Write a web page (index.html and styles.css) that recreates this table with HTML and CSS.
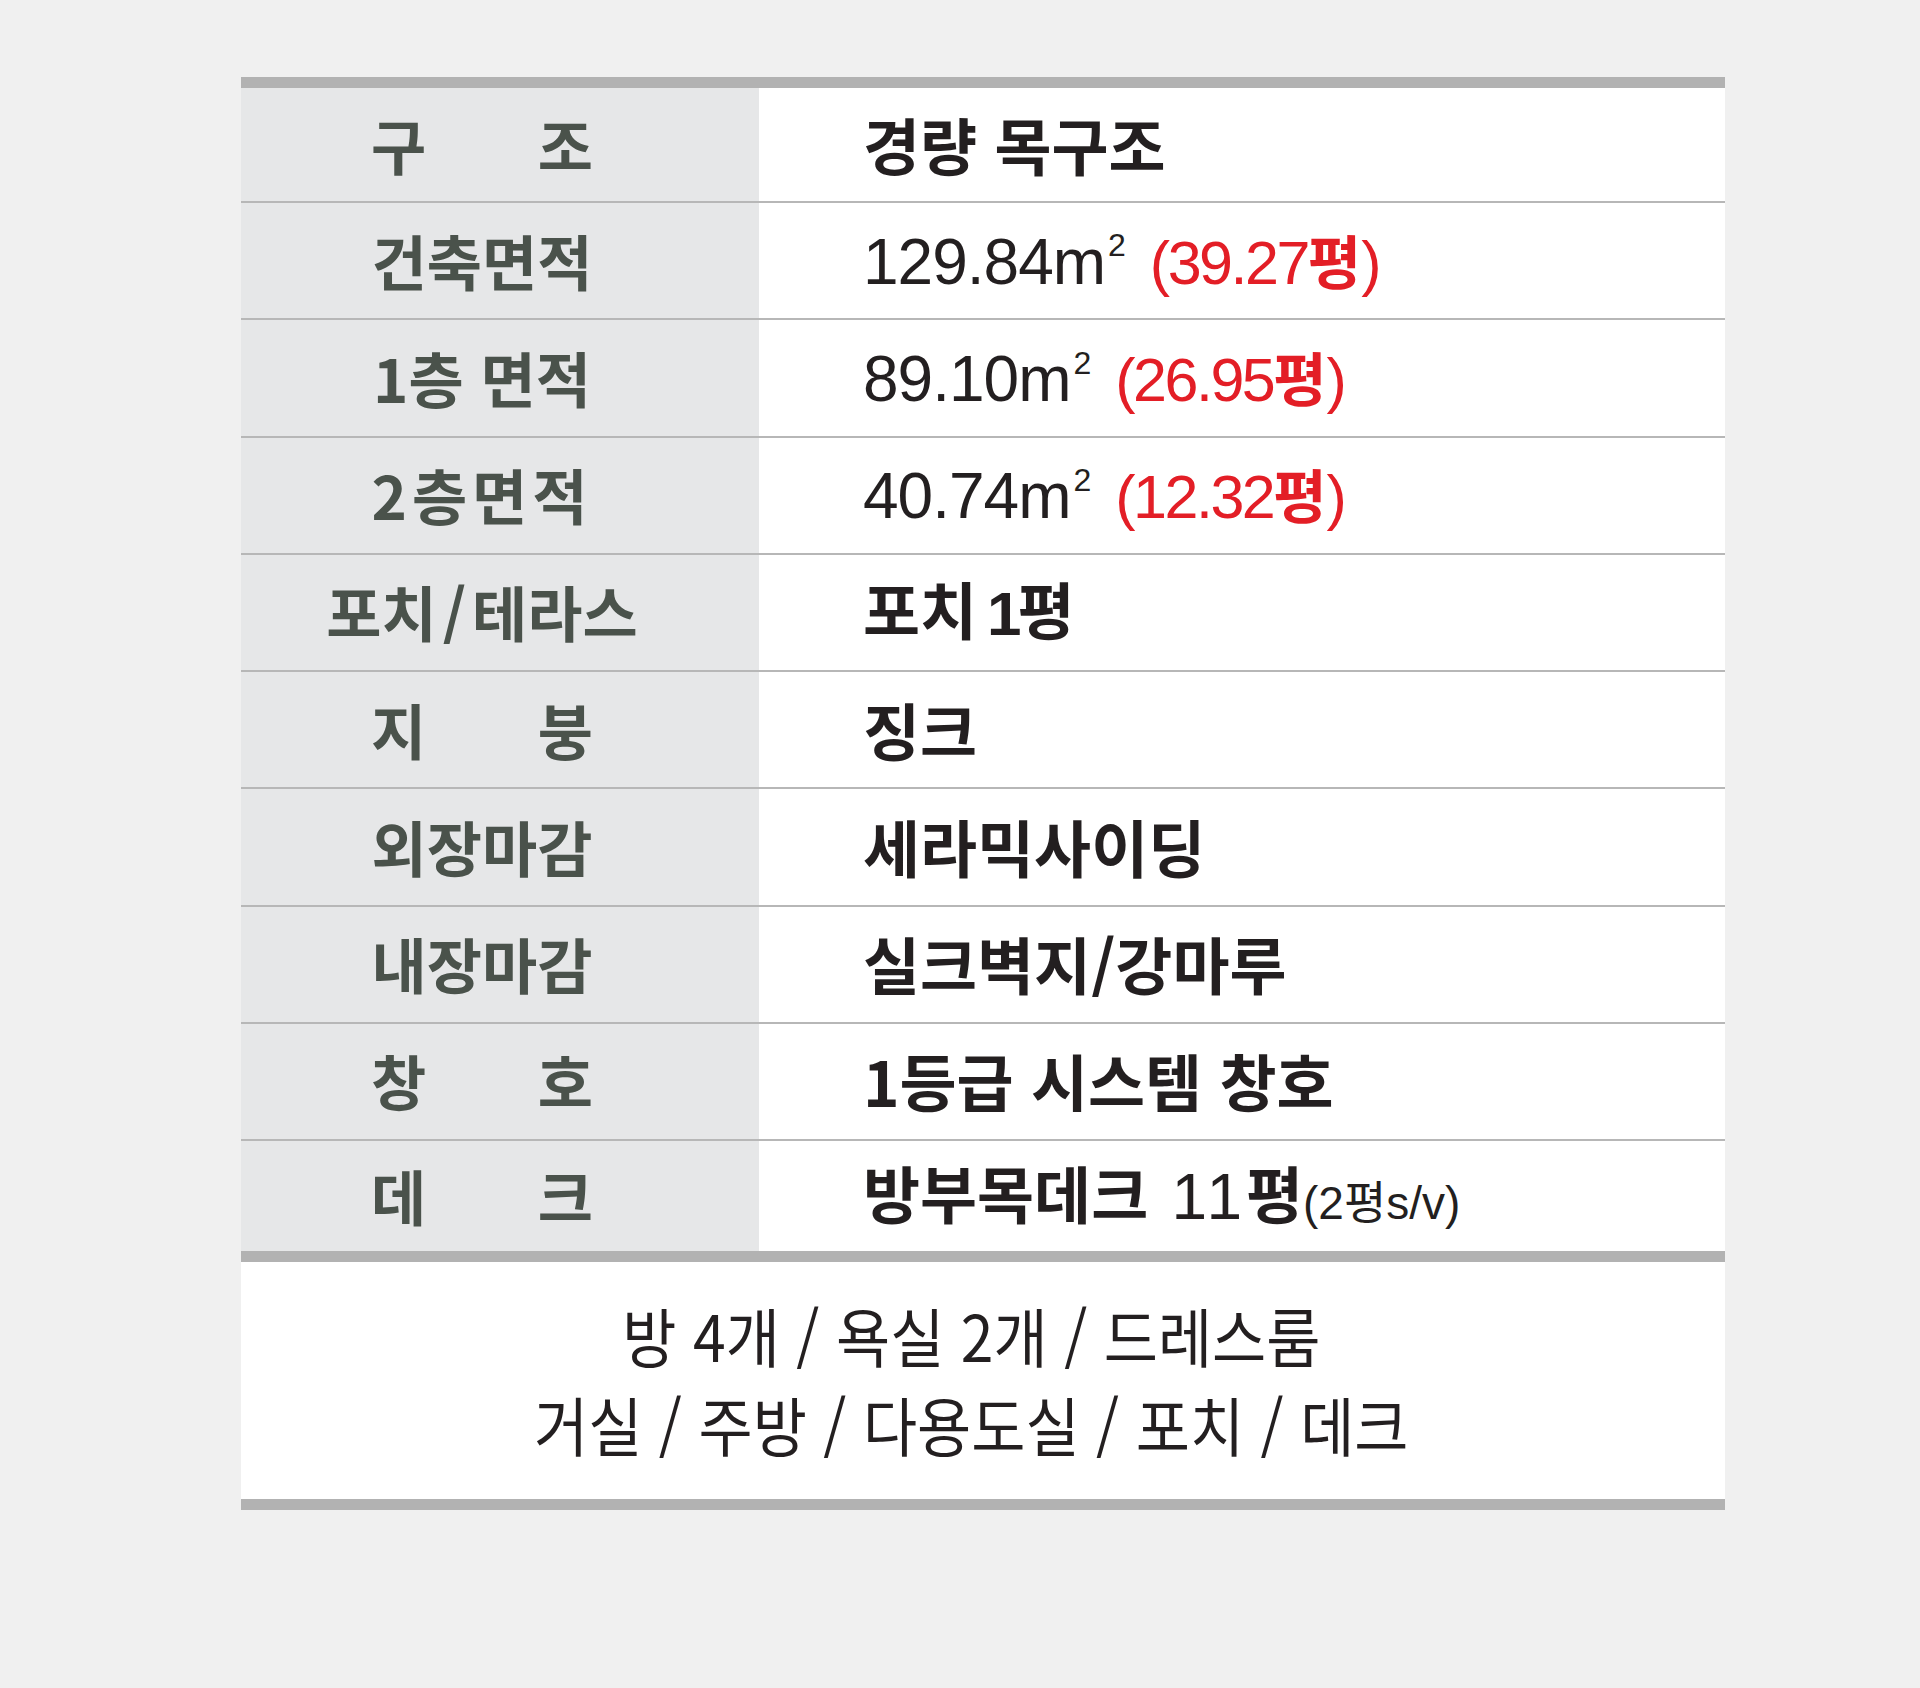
FILE: index.html
```html
<!DOCTYPE html>
<html lang="ko">
<head>
<meta charset="utf-8">
<title>사양표</title>
<link rel="stylesheet" href="styles.css">
</head>
<body>
<div class="page">
  <div class="spec">
    <div class="rows">
      <div class="row"><div class="label"><span class="lt spread"><i>구</i><i>조</i></span></div><div class="value"><span class="vt kr">경량 목구조</span></div></div>
      <div class="row"><div class="label"><span class="lt">건축면적</span></div><div class="value"><span class="vt"><span class="num">129.84m<sup>2</sup></span><span class="red">(39.27<b>평</b>)</span></span></div></div>
      <div class="row"><div class="label"><span class="lt">1층 면적</span></div><div class="value"><span class="vt"><span class="num">89.10m<sup>2</sup></span><span class="red">(26.95<b>평</b>)</span></span></div></div>
      <div class="row"><div class="label"><span class="lt wide">2층면적</span></div><div class="value"><span class="vt"><span class="num">40.74m<sup>2</sup></span><span class="red">(12.32<b>평</b>)</span></span></div></div>
      <div class="row"><div class="label"><span class="lt">포치<span class="slash">/</span>테라스</span></div><div class="value"><span class="vt kr">포치<span class="one">1</span>평</span></div></div>
      <div class="row"><div class="label"><span class="lt spread"><i>지</i><i>붕</i></span></div><div class="value"><span class="vt kr">징크</span></div></div>
      <div class="row"><div class="label"><span class="lt">외장마감</span></div><div class="value"><span class="vt kr">세라믹사이딩</span></div></div>
      <div class="row"><div class="label"><span class="lt">내장마감</span></div><div class="value"><span class="vt kr">실크벽지/강마루</span></div></div>
      <div class="row"><div class="label"><span class="lt spread"><i>창</i><i>호</i></span></div><div class="value"><span class="vt kr">1등급 시스템 창호</span></div></div>
      <div class="row"><div class="label"><span class="lt spread"><i>데</i><i>크</i></span></div><div class="value"><span class="vt kr">방부목데크 <span class="thin">11</span>평<span class="small">(2평s/v)</span></span></div></div>
    </div>
    <div class="rooms">
      <p class="line">방 4개 / 욕실 2개 / 드레스룸</p>
      <p class="line">거실 / 주방 / 다용도실 / 포치 / 데크</p>
    </div>
  </div>
</div>
</body>
</html>
```

FILE: styles.css
```css
html, body {
  margin: 0;
  padding: 0;
  background: #f0f0f0;
}

.page {
  width: 1920px;
  height: 1688px;
  padding: 77px 0 0 241px;
  box-sizing: border-box;
}

.spec {
  width: 1484px;
  background: #ffffff;
  border-top: 11px solid #b2b2b2;
  border-bottom: 11px solid #b2b2b2;
}

.rows {
  border-bottom: 11px solid #b2b2b2;
}

.row {
  display: flex;
  height: 117.25px;
  box-sizing: border-box;
  border-top: 2px solid #b7b7b7;
}

.row:first-child {
  height: 113px;
  border-top: 0;
}

.row:last-child {
  height: 112px;
}

.label {
  width: 518px;
  flex: 0 0 518px;
  background: #e6e7e8;
  display: flex;
  align-items: center;
  justify-content: center;
  padding: 0 36px 2px 0;
  box-sizing: border-box;
}

.lt {
  display: inline-block;
  font-family: "Noto Sans CJK KR", sans-serif;
  font-weight: 700;
  font-size: 60px;
  line-height: 1;
  color: #4a524b;
  white-space: nowrap;
}

.lt.spread {
  display: inline-flex;
  justify-content: space-between;
  width: 3.7em;
}

.lt.wide {
  letter-spacing: 5px;
}

.lt i {
  font-style: normal;
}

.slash {
  margin: 0 6px;
}

.value {
  flex: 1;
  display: flex;
  align-items: center;
  padding: 0 0 2px 104px;
  box-sizing: border-box;
}

.vt {
  display: inline-block;
  font-family: "Liberation Sans", "Noto Sans CJK KR", sans-serif;
  font-size: 62px;
  line-height: 1;
  color: #231f20;
  white-space: nowrap;
}

.vt.kr {
  font-family: "Noto Sans CJK KR", sans-serif;
  font-weight: 700;
}

.num {
  font-family: "Liberation Sans", sans-serif;
  font-size: 64px;
  letter-spacing: -1px;
  vertical-align: -6px;
}

.num sup {
  font-size: 0.5em;
  vertical-align: 0.85em;
  line-height: 0;
  letter-spacing: 0;
  margin-left: 3px;
}

.red {
  color: #e31e26;
  font-family: "Liberation Sans", sans-serif;
  font-size: 61px;
  letter-spacing: -2.5px;
  margin-left: 24px;
  vertical-align: -6px;
}

.red b {
  font-family: "Noto Sans CJK KR", sans-serif;
  font-weight: 700;
  font-size: 58px;
  letter-spacing: 0;
}

.one {
  font-family: "Liberation Sans", sans-serif;
  font-weight: 700;
  margin-left: 10px;
  letter-spacing: -4px;
}

.thin {
  font-family: "Liberation Sans", sans-serif;
  font-weight: 400;
  font-size: 64px;
  letter-spacing: 4px;
  margin-left: 6px;
}

.small {
  font-family: "Liberation Sans", "Noto Sans CJK KR", sans-serif;
  font-weight: 400;
  font-size: 46px;
}

.rooms {
  height: 237px;
  display: flex;
  flex-direction: column;
  justify-content: center;
  align-items: center;
  padding: 0 24px 4px 0;
  box-sizing: border-box;
}

.line {
  margin: 0;
  font-family: "Noto Sans CJK KR", sans-serif;
  font-weight: 400;
  font-size: 64px;
  line-height: 89px;
  color: #231f20;
  white-space: nowrap;
  transform: scaleX(0.92);
}
```
